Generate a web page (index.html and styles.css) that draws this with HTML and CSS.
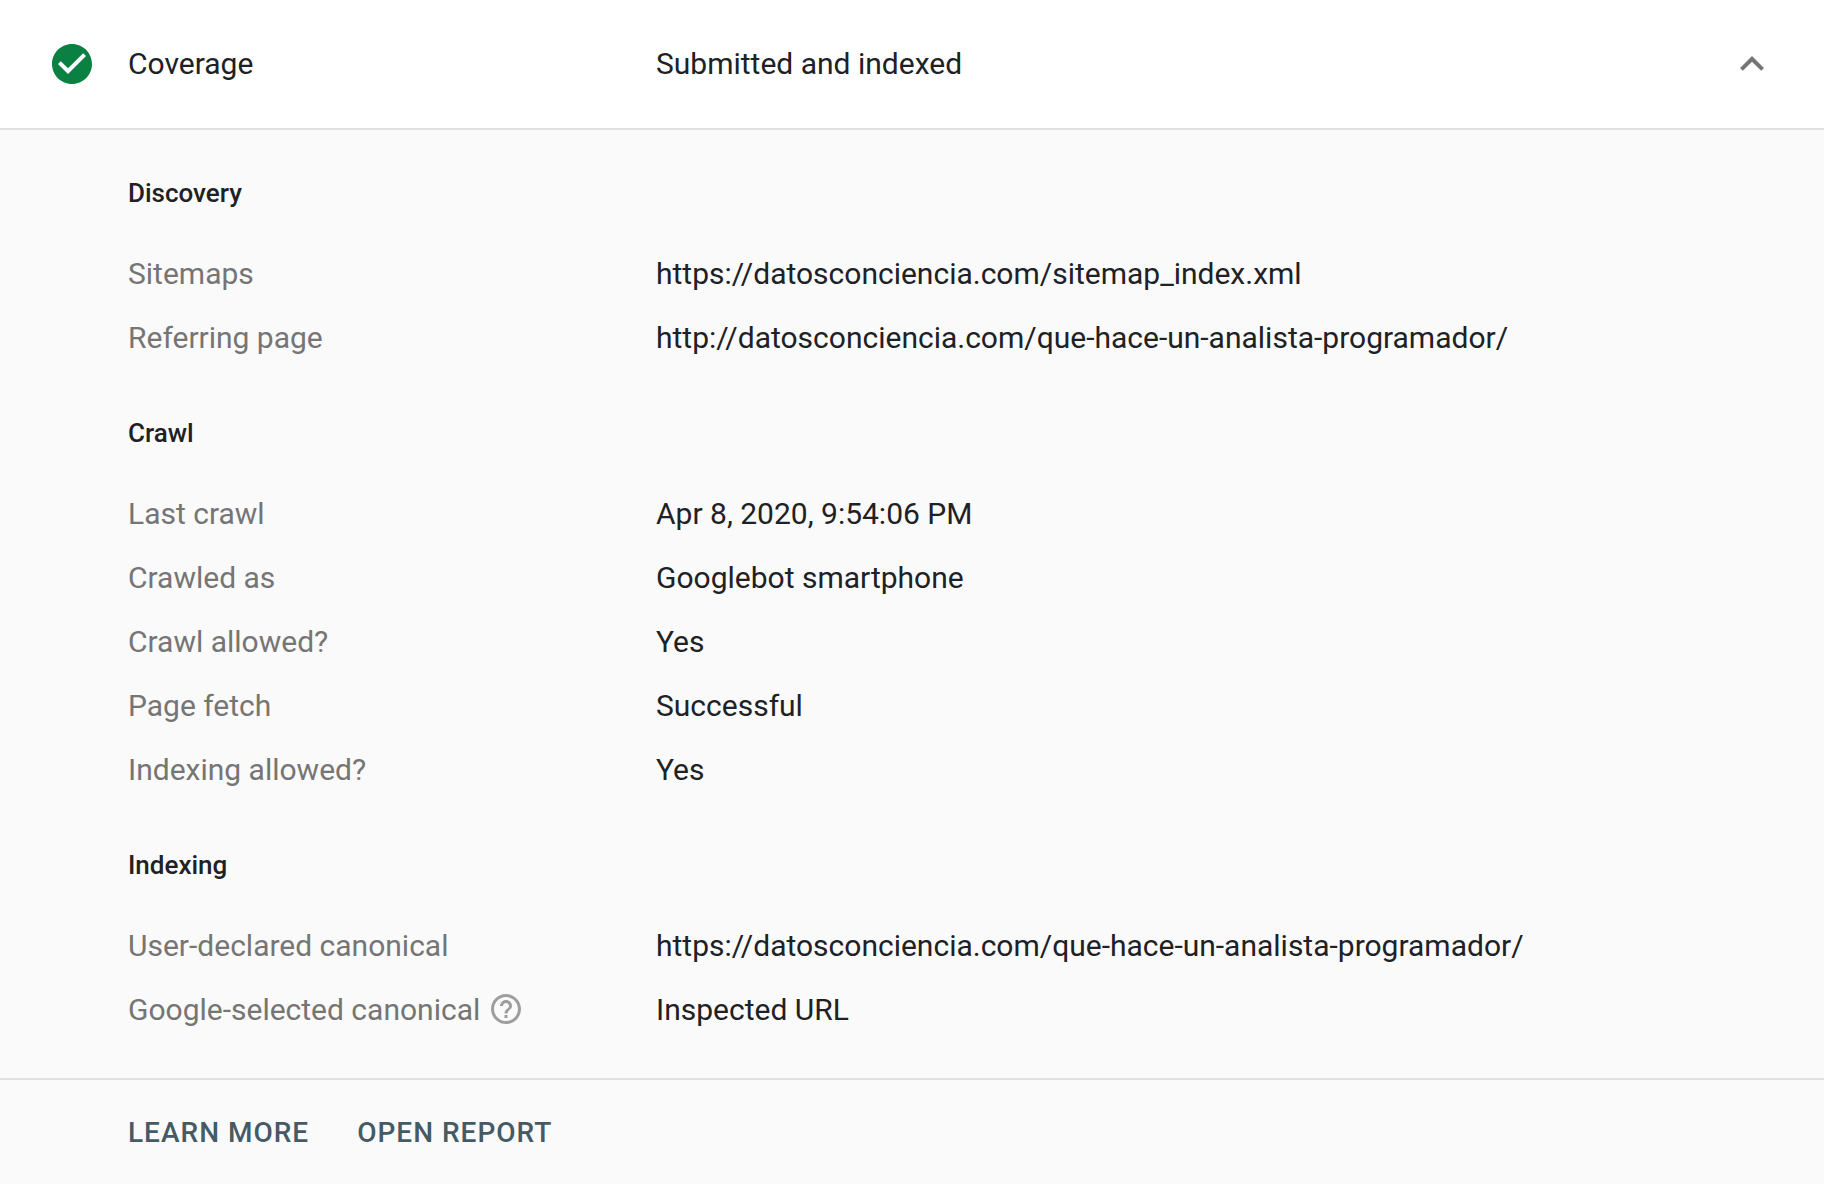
FILE: index.html
```html
<!DOCTYPE html>
<html lang="en">
<head>
  <meta charset="UTF-8" />
  <title>Coverage</title>
  <link rel="stylesheet" href="styles.css">
</head>
<body>
  <div class="header">
    <svg class="status-icon" viewBox="0 0 24 24"><path d="M12 2C6.48 2 2 6.48 2 12s4.48 10 10 10 10-4.48 10-10S17.52 2 12 2zm-2 15l-5-5 1.41-1.41L10 14.17l7.59-7.59L19 8l-9 9z"/></svg>
    <div class="header-title">Coverage</div>
    <div class="header-value">Submitted and indexed</div>
    <svg class="chevron" viewBox="0 0 24 24"><path d="M12 8l-6 6 1.41 1.41L12 10.83l4.59 4.58L18 14z"/></svg>
  </div>

  <div class="details">
    <div class="section">
      <h3>Discovery</h3>
      <div class="row"><div class="label">Sitemaps</div><div class="value">https://datosconciencia.com/sitemap_index.xml</div></div>
      <div class="row"><div class="label">Referring page</div><div class="value">http://datosconciencia.com/que-hace-un-analista-programador/</div></div>
    </div>

    <div class="section">
      <h3>Crawl</h3>
      <div class="row"><div class="label">Last crawl</div><div class="value">Apr 8, 2020, 9:54:06 PM</div></div>
      <div class="row"><div class="label">Crawled as</div><div class="value">Googlebot smartphone</div></div>
      <div class="row"><div class="label">Crawl allowed?</div><div class="value">Yes</div></div>
      <div class="row"><div class="label">Page fetch</div><div class="value">Successful</div></div>
      <div class="row"><div class="label">Indexing allowed?</div><div class="value">Yes</div></div>
    </div>

    <div class="section">
      <h3>Indexing</h3>
      <div class="row"><div class="label">User-declared canonical</div><div class="value">https://datosconciencia.com/que-hace-un-analista-programador/</div></div>
      <div class="row">
        <div class="label"><span>Google-selected canonical</span><svg class="help" viewBox="0 0 24 24"><path d="M11 18h2v-2h-2v2zm1-16C6.48 2 2 6.48 2 12s4.48 10 10 10 10-4.48 10-10S17.52 2 12 2zm0 18c-4.41 0-8-3.59-8-8s3.59-8 8-8 8 3.59 8 8-3.59 8-8 8zm0-14c-2.21 0-4 1.79-4 4h2c0-1.1.9-2 2-2s2 .9 2 2c0 2-3 1.75-3 5h2c0-2.25 3-2.5 3-5 0-2.21-1.79-4-4-4z"/></svg></div>
        <div class="value">Inspected URL</div>
      </div>
    </div>
  </div>

  <div class="footer">
    <a class="action">LEARN MORE</a>
    <a class="action">OPEN REPORT</a>
  </div>
</body>
</html>
```

FILE: styles.css
```css
html,
body {
  height: 100%;
}

body {
  margin: 0;
  background: #fafafa;
  color: #202124;
  font-family: Roboto, Arial, sans-serif;
  font-size: 30px;
  display: flex;
  flex-direction: column;
}

.header {
  height: 128px;
  background: #fff;
  border-bottom: 2px solid #e0e0e0;
  display: flex;
  align-items: center;
  padding: 0 48px 0 48px;
}

.status-icon {
  width: 48px;
  height: 48px;
  fill: #0b8043;
  margin-right: 32px;
}

.header-title {
  width: 528px;
  margin-bottom: 2px;
}

.header-value {
  flex: 1;
  margin-bottom: 2px;
}

.chevron {
  width: 48px;
  height: 48px;
  fill: #757575;
}

.details {
  padding: 39px 0 37px 128px;
}

.section {
  margin-bottom: 40px;
}

.section:last-child {
  margin-bottom: 0;
}

h3 {
  margin: 0;
  height: 48px;
  line-height: 48px;
  font-size: 26px;
  font-weight: 500;
  margin-bottom: 24px;
}

.row {
  display: flex;
  align-items: center;
  height: 64px;
}

.label {
  width: 528px;
  color: #757575;
  display: flex;
  align-items: center;
}

.help {
  width: 36px;
  height: 36px;
  fill: #9e9e9e;
  margin-left: 8px;
}

.footer {
  border-top: 2px solid #e0e0e0;
  display: flex;
  align-items: center;
  gap: 48px;
  padding-left: 128px;
  height: 104px;
}

.action {
  color: #455a64;
  font-size: 28px;
  font-weight: 500;
  letter-spacing: 1px;
  cursor: pointer;
}
```
